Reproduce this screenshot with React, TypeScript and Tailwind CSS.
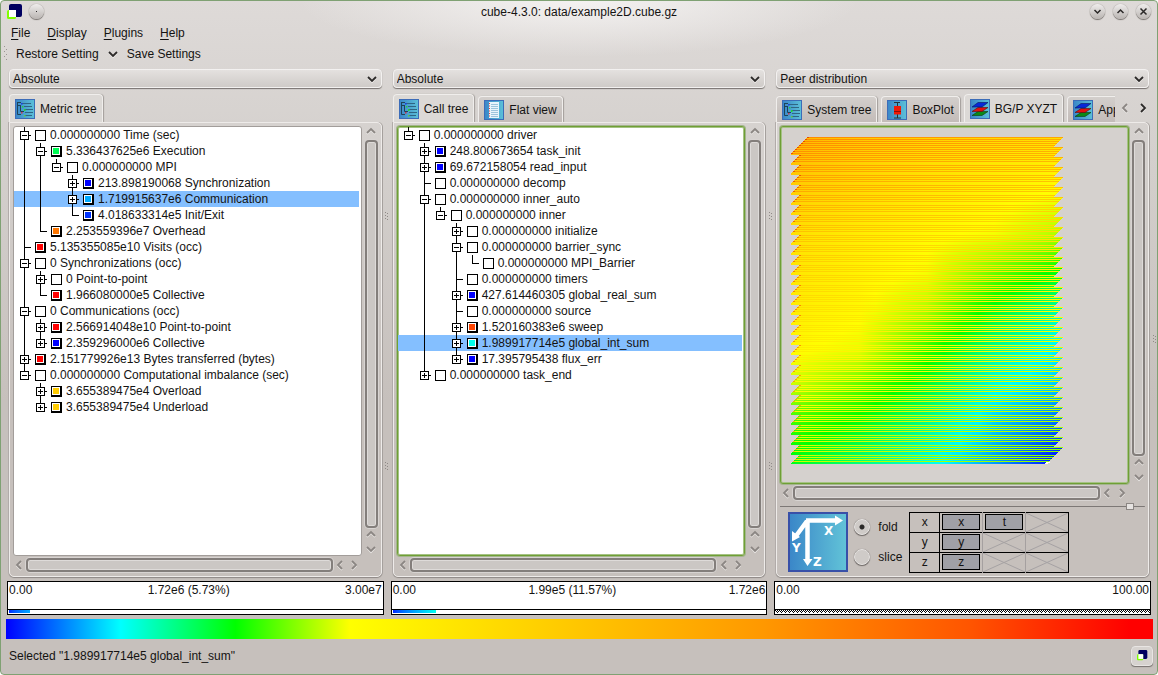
import { Fragment, type ReactNode } from "react";

type Node = {
  value: string;
  name: string;
  color?: string;
  state?: "open" | "closed";
  selected?: boolean;
  children?: Node[];
};

const metricTree: Node[] = [
  {
    value: "0.000000000", name: "Time (sec)", state: "open",
    children: [
      {
        value: "5.336437625e6", name: "Execution", color: "#00ff55", state: "open",
        children: [
          {
            value: "0.000000000", name: "MPI", state: "open",
            children: [
              { value: "213.898190068", name: "Synchronization", color: "#0000ff", state: "closed" },
              { value: "1.719915637e6", name: "Communication", color: "#00aaff", state: "closed", selected: true },
              { value: "4.018633314e5", name: "Init/Exit", color: "#0033ff" },
            ],
          },
        ],
      },
      { value: "2.253559396e7", name: "Overhead", color: "#ff7700" },
    ],
  },
  { value: "5.135355085e10", name: "Visits (occ)", color: "#ff0000" },
  {
    value: "0", name: "Synchronizations (occ)", state: "open",
    children: [
      { value: "0", name: "Point-to-point", state: "closed" },
      { value: "1.966080000e5", name: "Collective", color: "#ff0000" },
    ],
  },
  {
    value: "0", name: "Communications (occ)", state: "open",
    children: [
      { value: "2.566914048e10", name: "Point-to-point", color: "#ff0000", state: "closed" },
      { value: "2.359296000e6", name: "Collective", color: "#0000ff", state: "closed" },
    ],
  },
  { value: "2.151779926e13", name: "Bytes transferred (bytes)", color: "#ff0000", state: "closed" },
  {
    value: "0.000000000", name: "Computational imbalance (sec)", state: "open",
    children: [
      { value: "3.655389475e4", name: "Overload", color: "#ffcc00", state: "closed" },
      { value: "3.655389475e4", name: "Underload", color: "#ffcc00", state: "closed" },
    ],
  },
];

const callTree: Node[] = [
  {
    value: "0.000000000", name: "driver", state: "open",
    children: [
      { value: "248.800673654", name: "task_init", color: "#0000ff", state: "closed" },
      { value: "69.672158054", name: "read_input", color: "#0000ff", state: "closed" },
      { value: "0.000000000", name: "decomp" },
      {
        value: "0.000000000", name: "inner_auto", state: "open",
        children: [
          {
            value: "0.000000000", name: "inner", state: "open",
            children: [
              { value: "0.000000000", name: "initialize", state: "closed" },
              {
                value: "0.000000000", name: "barrier_sync", state: "open",
                children: [{ value: "0.000000000", name: "MPI_Barrier" }],
              },
              { value: "0.000000000", name: "timers" },
              { value: "427.614460305", name: "global_real_sum", color: "#0000ff", state: "closed" },
              { value: "0.000000000", name: "source" },
              { value: "1.520160383e6", name: "sweep", color: "#ff4400", state: "closed" },
              { value: "1.989917714e5", name: "global_int_sum", color: "#00ffee", state: "closed", selected: true },
              { value: "17.395795438", name: "flux_err", color: "#0000ff", state: "closed" },
            ],
          },
        ],
      },
      { value: "0.000000000", name: "task_end", state: "closed" },
    ],
  },
];

/* ---------- tree ---------- */

function Branch({ node, last }: { node: Node; last: boolean }) {
  return (
    <svg className="w-4 h-4 shrink-0" viewBox="0 0 16 16" shapeRendering="crispEdges" stroke="#000" fill="none">
      <path d={last ? "M7.5 0V9" : "M7.5 0V16"} />
      <path d="M8 8.5H14" />
      {node.state && <rect x="3.5" y="4.5" width="8" height="8" fill="#fff" />}
      {node.state && <path d={node.state === "closed" ? "M5 8.5H10M7.5 6V11" : "M5 8.5H10"} />}
    </svg>
  );
}

function Swatch({ color }: { color?: string }) {
  return (
    <svg className="w-[11px] h-[11px] shrink-0" viewBox="0 0 11 11" shapeRendering="crispEdges">
      <rect width="11" height="11" fill="#000" />
      <rect x="1" y="1" width={color ? 8 : 9} height={color ? 8 : 9} fill="#fff" />
      {color && <rect x="2" y="2" width="6" height="6" fill={color} />}
    </svg>
  );
}

function Rows({ nodes, trail = [] }: { nodes: Node[]; trail?: boolean[] }) {
  return (
    <ul>
      {nodes.map((node, i) => {
        const last = i === nodes.length - 1;
        return (
          <li key={node.name}>
            <div className={`flex h-4 items-center whitespace-nowrap pl-[3px] ${node.selected ? "bg-[#84bfff]" : ""}`}>
              {trail.map((open, d) => (
                <svg key={d} className="w-4 h-4 shrink-0" viewBox="0 0 16 16" shapeRendering="crispEdges">
                  {open && <path d="M7.5 0V16" stroke="#000" />}
                </svg>
              ))}
              <Branch node={node} last={last} />
              <span className="flex w-[17px] shrink-0 pl-0.5">
                <Swatch color={node.color} />
              </span>
              <span>{node.value} {node.name}</span>
            </div>
            {node.children && <Rows nodes={node.children} trail={[...trail, !last]} />}
          </li>
        );
      })}
    </ul>
  );
}

/* ---------- icons ---------- */

const arrows = {
  up: "M2 7L6 3L10 7",
  down: "M2 4L6 8L10 4",
  left: "M8 2L4 6L8 10",
  right: "M4 2L8 6L4 10",
};

function Arrow({ dir, dark }: { dir: keyof typeof arrows; dark?: boolean }) {
  return (
    <svg className="w-3 h-3 shrink-0" viewBox="0 0 12 12" fill="none">
      <path d={arrows[dir]} stroke="#f2f0ee" strokeWidth="1.6" transform="translate(0 1)" />
      <path d={arrows[dir]} stroke={dark ? "#2c2a29" : "#8b8683"} strokeWidth="1.8" />
    </svg>
  );
}

function CubeLogo({ className }: { className: string }) {
  return (
    <svg className={className} viewBox="0 0 16 16">
      <rect x="2" y="0" width="13" height="13" rx="2" fill="#000060" />
      <rect x="0" y="6" width="9" height="9" rx="1.5" fill="#80ff00" />
      <rect x="2" y="6" width="7" height="7" fill="#fff" />
    </svg>
  );
}

function IconFrame({ id, children }: { id: string; children: ReactNode }) {
  return (
    <svg className="w-5 h-5 shrink-0" viewBox="0 0 20 20">
      <defs>
        <linearGradient id={id}>
          <stop offset="0" stopColor="#3a86c8" />
          <stop offset="1" stopColor="#5cc0d8" />
        </linearGradient>
      </defs>
      <rect x="0.5" y="0.5" width="19" height="19" fill={`url(#${id})`} stroke="#3c6cb8" />
      {children}
    </svg>
  );
}

function TreeIcon({ id }: { id: string }) {
  return (
    <IconFrame id={id}>
      <path d="M2.5 3V15.5H6M2.5 6.5H6M5.5 7V12.5H9M3 3.5H6" stroke="#1f4358" fill="none" />
      <path d="M7 4.5H16M9 7.5H17M10 10.5H18M10 13.5H18M9 16.5H17" stroke="#2f6684" />
      <rect x="6" y="4" width="1.5" height="1.5" fill="#1d3fe0" />
      <rect x="7" y="7" width="1.5" height="1.5" fill="#20d040" />
      <rect x="9" y="10" width="1.5" height="2" fill="#20e030" />
      <rect x="6" y="13" width="1.5" height="1.5" fill="#d03050" />
      <rect x="9" y="16" width="1.5" height="1.5" fill="#60d040" />
    </IconFrame>
  );
}

function FlatIcon() {
  return (
    <IconFrame id="flat">
      <rect x="5" y="2" width="10" height="16" fill="#e8f4fb" />
      <path d="M7 4.5H14M7 6.5H14M7 8.5H14M7 10.5H14M7 12.5H14M7 14.5H14M7 16.5H14" stroke="#9cc4dc" />
      <path d="M5.5 3V18" stroke="#e04848" strokeDasharray="1 1.5" />
    </IconFrame>
  );
}

function BoxPlotIcon() {
  return (
    <IconFrame id="box">
      <path d="M7 2.5H13M10.5 2.5V18M7 18H14" stroke="#28323c" fill="none" />
      <rect x="7" y="6" width="7" height="8.5" fill="#f01808" />
      <path d="M7 11.5H14" stroke="#900c08" />
    </IconFrame>
  );
}

function LayersIcon({ id }: { id: string }) {
  return (
    <IconFrame id={id}>
      <path d="M2 16.5L8 12.5H18L12 16.5Z" fill="#0a8a18" stroke="#083c10" strokeWidth="0.6" />
      <path d="M2 12.5L8 8.5H18L12 12.5Z" fill="#e01010" stroke="#600808" strokeWidth="0.6" />
      <path d="M2 8L8 3.5H18L12 8Z" fill="#0828d8" stroke="#08185c" strokeWidth="0.6" />
    </IconFrame>
  );
}

function AxesIcon() {
  return (
    <svg className="w-[60px] h-[60px] shrink-0" viewBox="0 0 60 60">
      <defs>
        <linearGradient id="axes">
          <stop offset="0" stopColor="#3a86c8" />
          <stop offset="1" stopColor="#62c4d8" />
        </linearGradient>
      </defs>
      <rect x="1" y="1" width="58" height="58" fill="url(#axes)" stroke="#3850a8" strokeWidth="2" />
      <path d="M18 8.5H48M19.5 8V48M19 9L8 24" stroke="#fff" strokeWidth="4.5" fill="none" />
      <path d="M47 3.5L55 8.5L47 13.5ZM15 47H24.500L19.5 54ZM4 19L12 25L4 29.500Z" fill="#fff" />
      <g fill="#fff" fontFamily="DejaVu Sans" fontWeight="bold" fontSize="12">
        <text x="36" y="23">X</text>
        <text x="4" y="40">Y</text>
        <text x="25" y="54">Z</text>
      </g>
    </svg>
  );
}

/* ---------- topology plot ---------- */

const palette = [[0, 0, 255], [0, 255, 255], [0, 255, 0], [255, 255, 0], [255, 136, 0], [220, 50, 0]];

function shade(v: number) {
  const t = Math.max(0, Math.min(4.999, v));
  const i = Math.floor(t);
  const c = palette[i].map((a, k) => Math.round(a + (palette[i + 1][k] - a) * (t - i)));
  return `rgb(${c[0]},${c[1]},${c[2]})`;
}

// [row, values at equally spaced columns]
const field: [number, number[]][] = [
  [0, [3.6, 3.45, 3.35, 3.3, 3.25]],
  [53, [3.4, 3.3, 3.2, 3.1, 3.0]],
  [98, [3.25, 3.15, 3.05, 2.95, 2.65]],
  [138, [3.2, 3.1, 2.95, 2.35, 1.85]],
  [173, [3.15, 3.05, 2.65, 1.85, 1.3]],
  [213, [3.05, 2.9, 2.15, 1.4, 0.9]],
  [248, [2.8, 2.35, 1.8, 1.1, 0.75]],
  [278, [2.3, 2.0, 1.5, 0.85, 0.45]],
  [327, [1.9, 1.5, 1.1, 0.6, 0]],
];

function sample(y: number) {
  let i = 0;
  while (i < field.length - 2 && field[i + 1][0] < y) i++;
  const [y0, a] = field[i];
  const [y1, b] = field[i + 1];
  const t = (y - y0) / (y1 - y0);
  return a.map((v, k) => v + (b[k] - v) * t);
}

function Topology() {
  const rows = Array.from({ length: 327 }, (_, y) => {
    const tooth = (y + 2) % 10;
    const left = y < 17 ? 16 - y : Math.max(0, 8 - tooth);
    const right = y > 310 ? 272 - (y - 310) : 272 - (y % 10);
    const striped = y < 17 ? y % 2 === 0 : tooth % 2 === 0 && tooth < 8;
    const heat = 4 - (y < 100 ? y * 0.005 : 0.5 + (y - 100) * 0.003);
    const values = sample(y).map((v, k) => (striped ? Math.max(v, heat - k * 0.07) : v));
    return { y, left, right, striped, values };
  });
  return (
    <svg className="w-[272px] h-[327px]" viewBox="0 0 272 327" shapeRendering="crispEdges">
      {rows.map((r) => (
        <Fragment key={r.y}>
          <linearGradient id={`row${r.y}`} gradientUnits="userSpaceOnUse" x1="0" x2="272" y1="0" y2="0">
            {r.values.map((v, k) => {
              const next = r.values[k + 1] ?? v;
              return [0, 1, 2, 3].map((s) => (
                <stop key={`${k}-${s}`} offset={(k + s / 4) / 4} stopColor={shade(v + ((next - v) * s) / 4)} />
              ));
            })}
          </linearGradient>
          <rect x={r.left} y={r.y} width={r.right - r.left} height="1" fill={`url(#row${r.y})`} />
          {r.striped && <rect x={r.left} y={r.y} width="2" height="1" fill={shade(r.values[0] + 0.7)} />}
        </Fragment>
      ))}
      <path d="M254 326.5H257M255 325.500H259" stroke="#fff" fill="none" />
    </svg>
  );
}

/* ---------- widgets ---------- */

function Combo({ label, value }: { label: string; value: string }) {
  return (
    <div className="relative mx-0.5 mt-[5px]">
      <select
        aria-label={label}
        defaultValue={value}
        className="block h-[19px] w-full appearance-none rounded-[4px] border border-[#f3f1f0] bg-gradient-to-b from-[#e4e1df] to-[#cfcbc8] pl-[3px] pr-6 shadow-[0_1px_1px_#77726f]"
      >
        <option>{value}</option>
      </select>
      <span className="pointer-events-none absolute right-1 top-1">
        <Arrow dir="down" dark />
      </span>
    </div>
  );
}

function Tab({ icon, label, active }: { icon: ReactNode; label: string; active?: boolean }) {
  return (
    <button
      role="tab"
      aria-selected={!!active}
      className={`flex shrink-0 items-center gap-[5px] whitespace-nowrap rounded-t-[4px] border border-b-0 border-[#f0eeec] pl-[5px] pr-[5px] shadow-[1px_0_1px_#a39e9b] ${
        active ? "h-7 bg-[#dcd9d6]" : "h-[26px] bg-gradient-to-b from-[#d3cfcc] to-[#c3bcb9]"
      }`}
    >
      {icon}
      {label}
    </button>
  );
}

function Thumb() {
  return (
    <div className="flex-1 rounded-[4px] border-2 border-[#837e7b] bg-[#cbc7c4] shadow-[inset_0_0_0_1px_#dedbd9,0_0_0_1px_#d8d4d2]" />
  );
}

function VScroll() {
  return (
    <div className="flex w-[13px] shrink-0 flex-col items-stretch">
      <div className="flex h-[14px] justify-center"><Arrow dir="up" /></div>
      <Thumb />
      <div className="flex h-7 flex-col items-center justify-around">
        <Arrow dir="up" />
        <Arrow dir="down" />
      </div>
    </div>
  );
}

function HScroll() {
  return (
    <div className="mr-4 mt-0.5 flex h-[14px] shrink-0">
      <div className="flex w-[13px] items-center"><Arrow dir="left" /></div>
      <Thumb />
      <div className="flex w-[29px] items-center justify-around">
        <Arrow dir="left" />
        <Arrow dir="right" />
      </div>
    </div>
  );
}

function View({ focused, plain, children }: { focused?: boolean; plain?: boolean; children: ReactNode }) {
  return (
    <div className="flex min-h-0 flex-1 gap-[3px]">
      <div
        className={`min-w-0 flex-1 overflow-hidden rounded-[3px] border ${plain ? "bg-[#d5d1ce]" : "bg-white"} ${
          focused
            ? "border-[#6f9f35] shadow-[inset_0_0_0_1px_#a5c284,0_0_0_1px_#a3b58c]"
            : "border-[#a29d9a]"
        }`}
      >
        {children}
      </div>
      <VScroll />
    </div>
  );
}

function Panel({ children }: { children: ReactNode }) {
  return (
    <div className="mx-0.5 flex min-h-0 flex-1 flex-col rounded-b-[5px] rounded-tr-[5px] border border-[#eeebe9] p-[3px] pb-1 shadow-[0_1px_1px_#8c8784,-1px_0_0_#b5b0ad,1px_0_0_#a8a3a0]">
      {children}
    </div>
  );
}

function ValueBox({ min, mid, max, percent }: { min: string; mid?: string; max: string; percent?: number }) {
  return (
    <div className="mt-1 h-[34px] shrink-0 border border-black bg-white">
      <div className="flex h-[28px] justify-between border-b border-black px-px leading-4">
        <span>{min}</span>
        <span>{mid}</span>
        <span>{max}</span>
      </div>
      {percent === undefined ? (
        <svg className="block h-1 w-full" shapeRendering="crispEdges">
          <defs>
            <pattern id="hatch" width="4" height="4" patternUnits="userSpaceOnUse">
              <path d="M0 0h1v1H0zM2 0h1v1H2zM1 1h1v1H1zM3 1h1v1H3zM2 2h1v1H2z" />
            </pattern>
          </defs>
          <rect width="100%" height="4" fill="url(#hatch)" />
        </svg>
      ) : (
        <div className="px-px">
          <div
            className={`h-[3px] bg-gradient-to-r ${percent > 10 ? "from-[#0022ff] to-[#00ffee]" : "from-[#0022ff] to-[#00aaff]"}`}
            style={{ width: `${percent}%` }}
          />
        </div>
      )}
    </div>
  );
}

function Dots() {
  return (
    <svg className="h-[10px] w-1" viewBox="0 0 4 10" shapeRendering="crispEdges" fill="#8f8a87">
      <path d="M0 0h1v1H0zM2 1h1v1H2zM0 3h1v1H0zM2 4h1v1H2zM0 6h1v1H0zM2 7h1v1H2z" />
    </svg>
  );
}

function Handle() {
  return (
    <div className="flex w-[7px] shrink-0 flex-col items-center justify-between pb-[143px] pt-[148px]">
      <Dots />
      <Dots />
    </div>
  );
}

const round =
  "flex h-[15px] w-[15px] items-center justify-center rounded-full bg-gradient-to-b from-[#efedec] to-[#bab5b2] shadow-[0_1px_1px_#77726f,0_0_1px_#77726f]";

function WindowButton({ label, path }: { label: string; path: string }) {
  return (
    <button aria-label={label} className={round}>
      <svg className="h-[9px] w-[9px]" viewBox="0 0 9 9" fill="none" stroke="#2b2928" strokeWidth="1.5">
        <path d={path} />
      </svg>
    </button>
  );
}

const axisRows = [
  ["x", "x", "t", ""],
  ["y", "y", "", ""],
  ["z", "z", "", ""],
];

function AxisTable() {
  return (
    <table className="ml-1 border-collapse border border-black text-center">
      <tbody>
        {axisRows.map(([head, ...cells]) => (
          <tr key={head} className="h-5 border-b border-black">
            <th className="w-[30px] border-r border-black p-0 font-normal leading-4">{head}</th>
            {cells.map((cell, i) => (
              <td key={i} className="h-5 w-[43px] border-r border-[#a5a0a0] p-0 last:border-black">
                {cell ? (
                  <button className="mx-auto block h-4 w-[38px] border border-black bg-[#a0a0a6] leading-[13px]">{cell}</button>
                ) : (
                  <svg className="block h-[19px] w-full" viewBox="0 0 43 19" preserveAspectRatio="none">
                    <path d="M0 0L43 19M43 0L0 19" stroke="#a5a1a3" />
                  </svg>
                )}
              </td>
            ))}
          </tr>
        ))}
      </tbody>
    </table>
  );
}

function FoldOption({ label, checked }: { label: string; checked?: boolean }) {
  return (
    <label className="flex items-center gap-2">
      <input
        type="radio"
        name="fold"
        defaultChecked={checked}
        className="h-4 w-4 appearance-none rounded-full border border-[#e6e3e1] bg-[#cfcbc8] shadow-[0_1px_1px_#6d6865,0_0_1px_#8a8582] checked:bg-[radial-gradient(circle,#2b2928_2px,#cfcbc8_3px)]"
      />
      {label}
    </label>
  );
}

export default function App() {
  return (
    <div className="flex min-h-screen flex-col overflow-hidden rounded-[4px] border border-[#7fa173] bg-[radial-gradient(ellipse_280px_56px_at_50%_0px,#f4f2f1,transparent),linear-gradient(to_bottom,#dedad8,#d3cfcc_170px,#c6c0bc_400px)] font-['Liberation_Sans',Arial,sans-serif] text-xs text-[#141312]">
      <header className="flex h-[21px] shrink-0 items-center justify-between pl-1.5 pr-1.5">
        <div className="flex w-24 items-center gap-1.5">
          <CubeLogo className="h-4 w-4" />
          <button aria-label="Pin window" className={round}>
            <span className="h-px w-px bg-[#2b2928]" />
          </button>
        </div>
        <h1>cube-4.3.0: data/example2D.cube.gz</h1>
        <div className="flex w-24 justify-end gap-2">
          <WindowButton label="Minimize" path="M1.500 3L4.500 6L7.500 3" />
          <WindowButton label="Maximize" path="M1.500 6L4.500 3L7.500 6" />
          <WindowButton label="Close" path="M1.500 1.500L7.500 7.500M7.500 1.500L1.500 7.500" />
        </div>
      </header>

      <nav className="flex h-[21px] shrink-0 items-center gap-[17px] pl-[10px]">
        {["File", "Display", "Plugins", "Help"].map((item) => (
          <button key={item}>
            <u className="underline-offset-2">{item[0]}</u>
            {item.slice(1)}
          </button>
        ))}
      </nav>

      <div className="flex h-[21px] shrink-0 items-center pl-0.5">
        <svg className="mr-2 h-[18px] w-[5px]" viewBox="0 0 5 18" shapeRendering="crispEdges" fill="#9a9592">
          <path d="M1 1h1v1H1zM3 4h1v1H3zM1 6h1v1H1zM3 9h1v1H3zM1 11h1v1H1zM3 14h1v1H3z" />
        </svg>
        <button className="flex items-center gap-2">
          Restore Setting
          <Arrow dir="down" dark />
        </button>
        <button className="ml-2">Save Settings</button>
      </div>

      <main className="flex min-h-0 flex-1 pl-1.5">
        <section className="flex min-w-0 flex-1 basis-0 flex-col">
          <Combo label="Metric value mode" value="Absolute" />
          <div role="tablist" className="mx-0.5 mt-1.5 flex h-7 items-end gap-1">
            <Tab active icon={<TreeIcon id="metric" />} label="Metric tree" />
          </div>
          <Panel>
            <View>
              <div className="pr-0.5"><Rows nodes={metricTree} /></div>
            </View>
            <HScroll />
          </Panel>
          <ValueBox min="0.00" mid="1.72e6 (5.73%)" max="3.00e7" percent={5.73} />
        </section>

        <Handle />

        <section className="flex min-w-0 flex-1 basis-0 flex-col">
          <Combo label="Call value mode" value="Absolute" />
          <div role="tablist" className="mx-0.5 mt-1.5 flex h-7 items-end gap-1">
            <Tab active icon={<TreeIcon id="call" />} label="Call tree" />
            <Tab icon={<FlatIcon />} label="Flat view" />
          </div>
          <Panel>
            <View focused>
              <div className="pr-0.5"><Rows nodes={callTree} /></div>
            </View>
            <HScroll />
          </Panel>
          <ValueBox min="0.00" mid="1.99e5 (11.57%)" max="1.72e6" percent={11.57} />
        </section>

        <Handle />

        <section className="flex min-w-0 flex-1 basis-0 flex-col">
          <Combo label="System value mode" value="Peer distribution" />
          <div className="mx-0.5 mt-1.5 flex h-7">
            <div role="tablist" className="flex min-w-0 flex-1 items-end gap-1 overflow-hidden">
              <Tab icon={<TreeIcon id="system" />} label="System tree" />
              <Tab icon={<BoxPlotIcon />} label="BoxPlot" />
              <Tab active icon={<LayersIcon id="bgp" />} label="BG/P XYZT" />
              <Tab icon={<LayersIcon id="app" />} label="App" />
            </div>
            <div className="flex w-[34px] items-center justify-between pl-1">
              <button aria-label="Scroll tabs left"><Arrow dir="left" /></button>
              <button aria-label="Scroll tabs right"><Arrow dir="right" dark /></button>
            </div>
          </div>
          <Panel>
            <View focused plain>
              <div className="pl-[10px] pt-[10px]"><Topology /></div>
            </View>
            <HScroll />
            <input
              type="range"
              aria-label="Plane distance"
              defaultValue={97}
              className="mt-[3px] block h-[7px] w-full appearance-none bg-[linear-gradient(#7d7876,#7d7876)] bg-[length:100%_1px] bg-center bg-no-repeat [&::-webkit-slider-thumb]:h-[7px] [&::-webkit-slider-thumb]:w-2 [&::-webkit-slider-thumb]:appearance-none [&::-webkit-slider-thumb]:border [&::-webkit-slider-thumb]:border-[#8a8582] [&::-webkit-slider-thumb]:bg-[#e6e3e1]"
            />
            <div className="flex h-[62px] shrink-0 items-center pl-2 pt-0.5">
              <AxesIcon />
              <div className="ml-1.5 mr-[3px] flex h-[60px] flex-col justify-around">
                <FoldOption label="fold" checked />
                <FoldOption label="slice" />
              </div>
              <AxisTable />
            </div>
          </Panel>
          <ValueBox min="0.00" max="100.00" />
        </section>

        <div className="flex w-[6px] shrink-0 items-center justify-end">
          <Dots />
        </div>
      </main>

      <div className="ml-[5px] mr-1 mt-1 h-5 shrink-0 bg-[linear-gradient(to_right,#0000ff,#00ffff_10%,#00ff00_20%,#ffff00_30%,#ff9800_66%,#ff5500_84%,#ff0000_98%)]" />

      <footer className="flex h-[35px] shrink-0 items-center justify-between pb-0.5 pl-2 pr-1">
        <p>Selected "1.989917714e5 global_int_sum"</p>
        <button
          aria-label="About Cube"
          className="flex h-5 w-[22px] items-center justify-center rounded-[4px] border border-[#e8e5e3] bg-[#d6d2cf] shadow-[0_1px_1px_#77726f]"
        >
          <CubeLogo className="h-[11px] w-[11px]" />
        </button>
      </footer>
    </div>
  );
}
